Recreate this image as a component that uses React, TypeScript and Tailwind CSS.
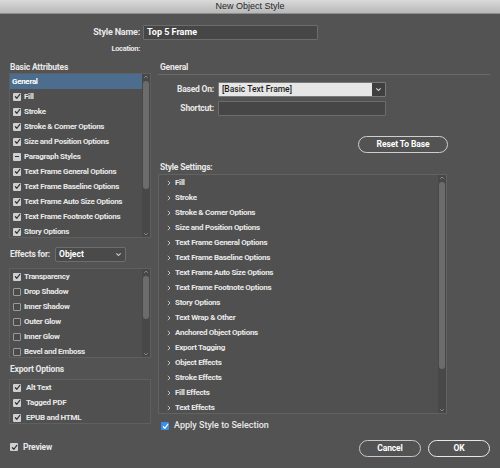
import React from 'react';

type BoxState = 'on' | 'off' | 'mixed' | 'blue';

function Check({ state }: { state: BoxState }) {
  if (state === 'off') {
    return <span className="w-[8px] h-[8px] shrink-0 rounded-[1px] border border-[#9a9a9a] bg-[#4a4a4a]" />;
  }
  if (state === 'mixed') {
    return (
      <span className="w-[8px] h-[8px] shrink-0 rounded-[1px] bg-[#cfcfcf] flex items-center justify-center">
        <span className="w-[4px] h-[1.5px] bg-[#333]" />
      </span>
    );
  }
  const blue = state === 'blue';
  return (
    <span className={blue ? 'w-[8px] h-[8px] shrink-0 rounded-[1px] bg-[#3b8ee6] flex items-center justify-center' : 'w-[8px] h-[8px] shrink-0 rounded-[1px] bg-[#cfcfcf] flex items-center justify-center'}>
      <svg width="7" height="7" viewBox="0 0 8 8">
        <path d="M1.6 4.3 L3.3 6 L6.6 1.7" fill="none" stroke={blue ? '#ffffff' : '#333333'} strokeWidth="1.4" strokeLinecap="round" strokeLinejoin="round" />
      </svg>
    </span>
  );
}

function Scroll({ thumb }: { thumb: string }) {
  return (
    <div className="w-[8px] self-stretch bg-[#484848] flex flex-col items-center">
      <svg width="6" height="6" viewBox="0 0 6 6" className="shrink-0">
        <path d="M1.2 3.8 L3 2 L4.8 3.8" fill="none" stroke="#8c8c8c" strokeWidth="0.9" />
      </svg>
      <div className={thumb} />
      <div className="flex-1" />
      <svg width="6" height="6" viewBox="0 0 6 6" className="shrink-0">
        <path d="M1.2 2.2 L3 4 L4.8 2.2" fill="none" stroke="#8c8c8c" strokeWidth="0.9" />
      </svg>
    </div>
  );
}

function Chevron({ color = '#c8c8c8' }: { color?: string }) {
  return (
    <svg width="7" height="5" viewBox="0 0 7 5">
      <path d="M1.3 1.3 L3.5 3.5 L5.7 1.3" fill="none" stroke={color} strokeWidth="1.1" />
    </svg>
  );
}

const basic: [string, BoxState][] = [
  ['Fill', 'on'],
  ['Stroke', 'on'],
  ['Stroke & Corner Options', 'on'],
  ['Size and Position Options', 'on'],
  ['Paragraph Styles', 'mixed'],
  ['Text Frame General Options', 'on'],
  ['Text Frame Baseline Options', 'on'],
  ['Text Frame Auto Size Options', 'on'],
  ['Text Frame Footnote Options', 'on'],
  ['Story Options', 'on'],
];

const effects: [string, BoxState][] = [
  ['Transparency', 'on'],
  ['Drop Shadow', 'off'],
  ['Inner Shadow', 'off'],
  ['Outer Glow', 'off'],
  ['Inner Glow', 'off'],
  ['Bevel and Emboss', 'off'],
];

const exportOpts = ['Alt Text', 'Tagged PDF', 'EPUB and HTML'];

const settings = [
  'Fill',
  'Stroke',
  'Stroke & Corner Options',
  'Size and Position Options',
  'Text Frame General Options',
  'Text Frame Baseline Options',
  'Text Frame Auto Size Options',
  'Text Frame Footnote Options',
  'Story Options',
  'Text Wrap & Other',
  'Anchored Object Options',
  'Export Tagging',
  'Object Effects',
  'Stroke Effects',
  'Fill Effects',
  'Text Effects',
];

export default function App() {
  return (
    <div className="w-[500px] h-[468px] overflow-hidden bg-[#535353] flex flex-col text-[#e8e8e8] text-[8px] tracking-[-0.3px] font-bold font-['Roboto',sans-serif]">
      {/* title bar */}
      <div className="h-[14px] shrink-0 bg-gradient-to-b from-[#dadada] to-[#b8b8b8] border-b border-[#8e8e8e] text-center text-[9px] leading-[13px] tracking-normal font-normal text-[#262626] font-['Liberation_Sans',sans-serif]">
        New Object Style
      </div>

      {/* name + location */}
      <div className="flex items-center mt-[11px] h-[15px]">
        <span className="w-[140px] text-right text-[9px] tracking-[-0.2px]">Style Name:</span>
        <div className="ml-[3px] w-[175px] h-[15px] bg-[#464646] border border-[#6c6c6c] rounded-[1px] px-[3px] leading-[13px] text-[9px] tracking-normal text-white">
          Top 5 Frame
        </div>
      </div>
      <div className="flex items-center mt-[4px] h-[10px]">
        <span className="w-[140px] text-right text-[7.5px]">Location:</span>
      </div>

      <div className="flex mt-[8px]">
        {/* left column */}
        <div className="ml-[9px] w-[142px] flex flex-col">
          <div className="h-[10px] leading-[10px] pl-[1px] text-[8.5px] tracking-[-0.2px]">Basic Attributes</div>
          <div className="mt-[1px] h-[165px] bg-[#4f4f4f] border border-[#5f5f5f] flex overflow-hidden">
            <div className="flex-1 flex flex-col">
              <div className="h-[15px] shrink-0 bg-[#4c6d8e] flex items-center pl-[2px] text-white">General</div>
              {basic.map(([label, s]) => (
                <div key={label} className="h-[15px] shrink-0 flex items-center gap-[3px] pl-[3px]">
                  <Check state={s} />
                  <span>{label}</span>
                </div>
              ))}
            </div>
            <Scroll thumb="w-[6px] mt-[1px] h-[108px] rounded-full bg-[#6c6c6c]" />
          </div>

          <div className="mt-[9px] h-[15px] flex items-center">
            <span className="pl-[1px] text-[8.5px] tracking-[-0.2px]">Effects for:</span>
            <div className="ml-[5px] w-[71px] h-[15px] bg-[#4a4a4a] border border-[#6e6e6e] rounded-[2px] flex items-center justify-between px-[3px]">
              <span className="text-[8.5px] tracking-normal text-white">Object</span>
              <Chevron />
            </div>
          </div>
          <div className="mt-[6px] h-[90px] bg-[#4f4f4f] border border-[#5f5f5f] flex overflow-hidden">
            <div className="flex-1 flex flex-col">
              {effects.map(([label, s]) => (
                <div key={label} className="h-[15px] shrink-0 flex items-center gap-[3px] pl-[3px]">
                  <Check state={s} />
                  <span>{label}</span>
                </div>
              ))}
            </div>
            <Scroll thumb="w-[6px] mt-[1px] h-[43px] rounded-full bg-[#6c6c6c]" />
          </div>

          <div className="mt-[6px] h-[10px] leading-[10px] pl-[1px] text-[8.5px] tracking-[-0.2px]">Export Options</div>
          <div className="mt-[5px] h-[45px] bg-[#505050] border border-[#5f5f5f] flex flex-col">
            {exportOpts.map((label) => (
              <div key={label} className="h-[15px] shrink-0 flex items-center gap-[5px] pl-[3px]">
                <Check state="on" />
                <span>{label}</span>
              </div>
            ))}
          </div>

          <div className="mt-[18px] h-[10px] flex items-center gap-[5px] pl-[1px]">
            <Check state="on" />
            <span className="text-[8.5px] tracking-[-0.2px]">Preview</span>
          </div>
        </div>

        {/* right column */}
        <div className="ml-[7px] w-[332px] flex flex-col">
          <div className="h-[10px] leading-[10px] pl-[2px] text-[8.5px] tracking-[-0.2px]">General</div>
          <div className="mt-[2px] h-px bg-[#6a6a6a]" />

          <div className="mt-[7px] h-[15px] flex items-center">
            <span className="w-[56px] text-right text-[8.5px] tracking-[-0.2px]">Based On:</span>
            <div className="ml-[4px] w-[168px] h-[15px] flex border border-[#7a7a7a] rounded-[1px] overflow-hidden">
              <div className="flex-1 bg-[#e6e6e6] text-[#1e1e1e] px-[3px] leading-[13px] text-[8.5px] font-medium tracking-normal">[Basic Text Frame]</div>
              <div className="w-[13px] bg-[#3f3f3f] flex items-center justify-center">
                <Chevron color="#d0d0d0" />
              </div>
            </div>
          </div>
          <div className="mt-[4px] h-[15px] flex items-center">
            <span className="w-[56px] text-right text-[8.5px] tracking-[-0.2px]">Shortcut:</span>
            <div className="ml-[4px] w-[168px] h-[15px] bg-[#464646] border border-[#6c6c6c] rounded-[1px]" />
          </div>

          <div className="mt-[20px] self-end mr-[42px] w-[90px] h-[17px] rounded-full border-[1.5px] border-[#cfcfcf] flex items-center justify-center text-[8.5px] tracking-[-0.1px] text-white">
            Reset To Base
          </div>

          <div className="mt-[9px] h-[10px] leading-[10px] pl-[2px] text-[8.5px] tracking-[-0.2px]">Style Settings:</div>
          <div className="mt-[2px] w-[289px] h-[240px] bg-[#505050] border border-[#626262] flex overflow-hidden">
            <div className="flex-1 flex flex-col">
              {settings.map((label) => (
                <div key={label} className="h-[15px] shrink-0 flex items-center gap-[4px] pl-[8px]">
                  <svg width="4" height="6" viewBox="0 0 4 6">
                    <path d="M0.8 0.8 L3 3 L0.8 5.2" fill="none" stroke="#cfcfcf" strokeWidth="0.9" />
                  </svg>
                  <span>{label}</span>
                </div>
              ))}
            </div>
            <Scroll thumb="w-[6px] mt-[1px] h-[187px] rounded-full bg-[#6c6c6c]" />
          </div>

          <div className="mt-[7px] h-[10px] flex items-center gap-[5px] pl-[3px]">
            <Check state="blue" />
            <span className="text-[9px] font-medium tracking-normal">Apply Style to Selection</span>
          </div>

          <div className="mt-[9px] flex justify-end gap-[7px]">
            <div className="w-[62px] h-[17px] rounded-full border-[1.5px] border-[#c8c8c8] flex items-center justify-center text-[8.5px] tracking-[-0.1px] text-white">
              Cancel
            </div>
            <div className="w-[62px] h-[17px] rounded-full border-[1.5px] border-[#e8e8e8] flex items-center justify-center text-[8.5px] tracking-[-0.1px] text-white">
              OK
            </div>
          </div>
        </div>
      </div>
    </div>
  );
}
